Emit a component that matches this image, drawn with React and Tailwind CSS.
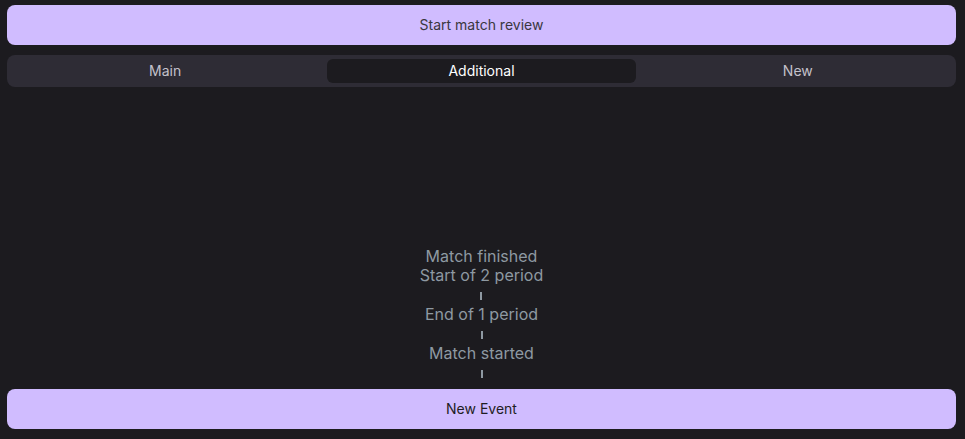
import React from 'react';

const events = ['Match finished', 'Start of 2 period', 'End of 1 period', 'Match started'];

export default function App() {
  return (
    <div
      className="h-screen flex flex-col bg-[#1c1b1f] pl-[7px] pr-[9px] pt-[5px] pb-[10px]"
      style={{ fontFamily: 'Inter, "Noto Sans", sans-serif' }}
    >
      <button className="h-10 w-full shrink-0 rounded-lg bg-[#d0bcff] text-sm text-[#3a3740]">
        Start match review
      </button>

      {/* tabs */}
      <div className="mt-[10px] h-8 shrink-0 grid grid-cols-3 gap-2 rounded-lg bg-[#2e2c35] p-1">
        <button className="rounded-md text-sm text-[#c3c1ca]">Main</button>
        <button className="rounded-md bg-[#1c1b1f] text-sm text-white">Additional</button>
        <button className="rounded-md text-sm text-[#c3c1ca]">New</button>
      </div>

      {/* timeline */}
      <div className="flex-1 flex flex-col justify-end items-center text-base leading-[19.5px] text-[#8e99a2]">
        {events.map((ev, i) => (
          <div key={ev} className="flex flex-col items-center">
            <span>{ev}</span>
            {i > 0 && <span className="mt-[6px] mb-[5px] h-[8.5px] w-[2px] bg-[#8e99a2]" />}
          </div>
        ))}
      </div>

      <button className="mt-[6px] h-10 w-full shrink-0 rounded-lg bg-[#d0bcff] text-sm text-[#1f1d24]">
        New Event
      </button>
    </div>
  );
}
